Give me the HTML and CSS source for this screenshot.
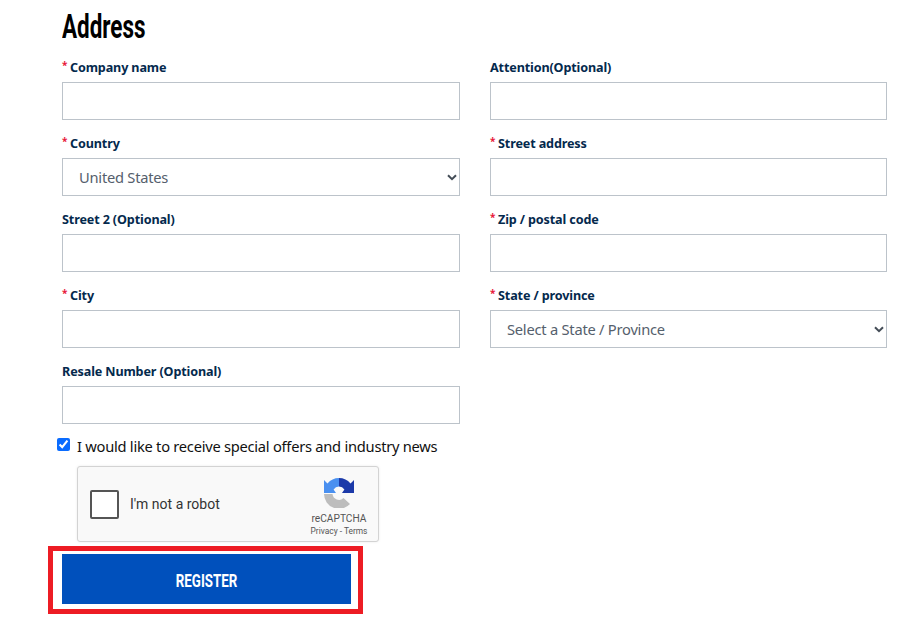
FILE: index.html
```html
<!DOCTYPE html>
<html lang="en">
<head>
<meta charset="utf-8">
<title>Address</title>
<link rel="stylesheet" href="styles.css">
</head>
<body>
<main class="page">
  <h2 class="title"><span>Address</span></h2>
  <form class="grid">
    <div class="field"><label class="lbl"><i>*</i>Company name</label><input class="ctl"></div>
    <div class="field"><label class="lbl">Attention(Optional)</label><input class="ctl"></div>
    <div class="field"><label class="lbl"><i>*</i>Country</label>
      <div class="selwrap"><div class="ctl sel">United States</div><svg class="chev" viewBox="0 0 10 7"><path d="M1 1.2 5 5.2 9 1.2" fill="none" stroke="#444d57" stroke-width="2"/></svg></div></div>
    <div class="field"><label class="lbl"><i>*</i>Street address</label><input class="ctl"></div>
    <div class="field"><label class="lbl">Street 2 (Optional)</label><input class="ctl"></div>
    <div class="field"><label class="lbl"><i>*</i>Zip / postal code</label><input class="ctl"></div>
    <div class="field"><label class="lbl"><i>*</i>City</label><input class="ctl"></div>
    <div class="field"><label class="lbl"><i>*</i>State / province</label>
      <div class="selwrap"><div class="ctl sel">Select a State / Province</div><svg class="chev" viewBox="0 0 10 7"><path d="M1 1.2 5 5.2 9 1.2" fill="none" stroke="#444d57" stroke-width="2"/></svg></div></div>
    <div class="field"><label class="lbl">Resale Number (Optional)</label><input class="ctl"></div>
  </form>
  <label class="offers"><input type="checkbox" checked class="check"><span>I would like to receive special offers and industry news</span></label>
  <div class="captcha">
    <div class="cbox"></div>
    <div class="robot">I'm not a robot</div>
    <div class="brand">
      <svg class="logo" viewBox="0 0 30 30">
        <path d="M15 0A15 15 0 0 0 3.5 5.5L0 2V15H12L9.6 11.4A6.5 6.5 0 0 1 15 8.5Z" fill="#4a90f0"/>
        <path d="M15 0A15 15 0 0 1 26.5 5.5L30 2V15H18L20.4 11.4A6.5 6.5 0 0 0 15 8.5Z" fill="#1c3aa9"/>
        <path d="M0 16H8.5A6.5 6.5 0 0 0 19.5 20L26 26A15 15 0 0 1 0 16Z" fill="#bdbdbd"/>
      </svg>
      <div class="rc">reCAPTCHA</div>
      <div class="terms">Privacy - Terms</div>
    </div>
  </div>
  <div class="action">
    <button type="button" class="register"><span>REGISTER</span></button>
    <div class="mark"></div>
  </div>
</main>
</body>
</html>
```
FILE: styles.css
```css
* { box-sizing: border-box; }
html, body { margin: 0; height: 619px; overflow: hidden; background: #fff; }
body { font-family: "Noto Sans", "Open Sans", sans-serif; color: #111; }
.page { padding: 10px 29px 0 62px; }
.title { margin: 0 0 14px; height: 33px; font: 700 33px/33px "Roboto", sans-serif; color: #000; }
.title span { display: inline-block; transform: scaleX(.68); transform-origin: left center; }
.grid { display: grid; grid-template-columns: 398px 397px; column-gap: 30px; row-gap: 0; }
.field { height: 76px; display: flex; flex-direction: column; }
.lbl { height: 25px; padding-top: 1px; line-height: 20px; font-size: 12.6px; letter-spacing: -.13px; font-weight: 700; color: #04294d; white-space: nowrap; }
.lbl i { display: inline-block; width: 8px; font-style: normal; font-size: 10px; line-height: 10px; color: #e8173a; font-weight: 700; vertical-align: 3px; }
.ctl { display: block; width: 100%; height: 38px; border: 1px solid #bcc3ca; background: #fff; border-radius: 0; outline: 0; margin: 0; }
.sel { padding-left: 16px; line-height: 36px; font-size: 14.7px; letter-spacing: -.24px; color: #55606c; }
.selwrap { position: relative; }
.chev { position: absolute; right: 3px; top: 16px; width: 10px; height: 7px; }
.offers { display: flex; align-items: center; height: 20px; margin: -3px 0 0 -5px; font-size: 14.7px; letter-spacing: -.26px; color: #111; }
.offers span { position: relative; top: 2px; }
.check { width: 13px; height: 13px; margin: 0 7px 0 0; accent-color: #0a6cff; }
.captcha { width: 302px; height: 76px; margin: 12px 0 0 15px; border: 1px solid #d3d3d3; border-radius: 3px; background: #f9f9f9; box-shadow: 0 0 3px rgba(0,0,0,.08); display: flex; align-items: center; font-family: Roboto, sans-serif; }
.cbox { width: 29px; height: 29px; margin-left: 12px; border: 2px solid #555; border-radius: 2px; background: #fff; }
.robot { margin-left: 11px; font-size: 14px; color: #333; white-space: nowrap; }
.brand { margin-left: auto; width: 70px; margin-right: 4px; padding-top: 7px; display: flex; flex-direction: column; align-items: center; color: #555; }
.logo { width: 30px; height: 30px; margin-bottom: 4px; }
.rc { font-size: 10.2px; line-height: 14px; }
.terms { font-size: 8.4px; line-height: 11px; white-space: nowrap; }
.action { position: relative; width: 289px; margin-top: 12px; }
.register { display: flex; align-items: center; justify-content: center; width: 289px; height: 50px; border: 0; padding: 4px 0 0; background: #0050bc; color: #fff; font: 700 18px/1 Roboto, sans-serif; }
.register span { display: inline-block; transform: scaleX(.74); }
.mark { position: absolute; left: -14px; top: -8px; width: 315px; height: 68px; border: 5px solid #ed1c24; pointer-events: none; }
```
